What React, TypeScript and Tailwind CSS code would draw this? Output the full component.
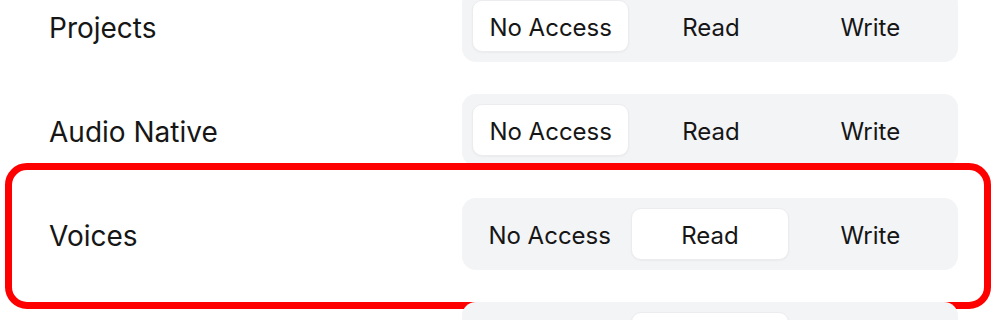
import { useState } from 'react';

type Level = 'none' | 'read' | 'write';

const options: { value: Level; label: string }[] = [
  { value: 'none', label: 'No Access' },
  { value: 'read', label: 'Read' },
  { value: 'write', label: 'Write' },
];

const initialRows: { name: string; level: Level; highlight?: boolean }[] = [
  { name: 'Projects', level: 'none' },
  { name: 'Audio Native', level: 'none' },
  { name: 'Voices', level: 'read', highlight: true },
  { name: 'Dubbing', level: 'read' },
];

function Segmented({ value, onChange }: { value: Level; onChange: (v: Level) => void }) {
  return (
    <div className="flex w-[496px] h-[72px] gap-1 rounded-[14px] bg-[#f3f4f6] p-[10px]">
      {options.map((o) => (
        <button
          key={o.value}
          onClick={() => onChange(o.value)}
          className={
            o.value === value
              ? 'flex-1 rounded-[10px] bg-white border border-[#ececee] pt-1 text-[24px] leading-none text-[#161616] shadow-[0_1px_2px_rgba(0,0,0,0.04)]'
              : 'flex-1 rounded-[10px] pt-1 text-[24px] leading-none text-[#161616]'
          }
        >
          {o.label}
        </button>
      ))}
    </div>
  );
}

export default function App() {
  const [rows, setRows] = useState(initialRows);

  return (
    <div
      className="relative w-[998px] h-[320px] overflow-hidden bg-white"
      style={{ fontFamily: 'Inter, "Noto Sans", sans-serif' }}
    >
      <div className="-mt-[26px] flex flex-col">
        {rows.map((r, i) => (
          <div key={r.name} className="relative flex h-[104px] items-center justify-between pl-[49px] pr-[40px]">
            {r.highlight && (
              <div className="pointer-events-none absolute left-[5px] right-[7px] top-[-19px] bottom-[-23px] rounded-[22px] border-[7px] border-[#ff0000]" />
            )}
            <span className="mt-1 text-[28px] leading-none text-[#161616]">{r.name}</span>
            <Segmented
              value={r.level}
              onChange={(v) => setRows(rows.map((x, j) => (j === i ? { ...x, level: v } : x)))}
            />
          </div>
        ))}
      </div>
    </div>
  );
}
